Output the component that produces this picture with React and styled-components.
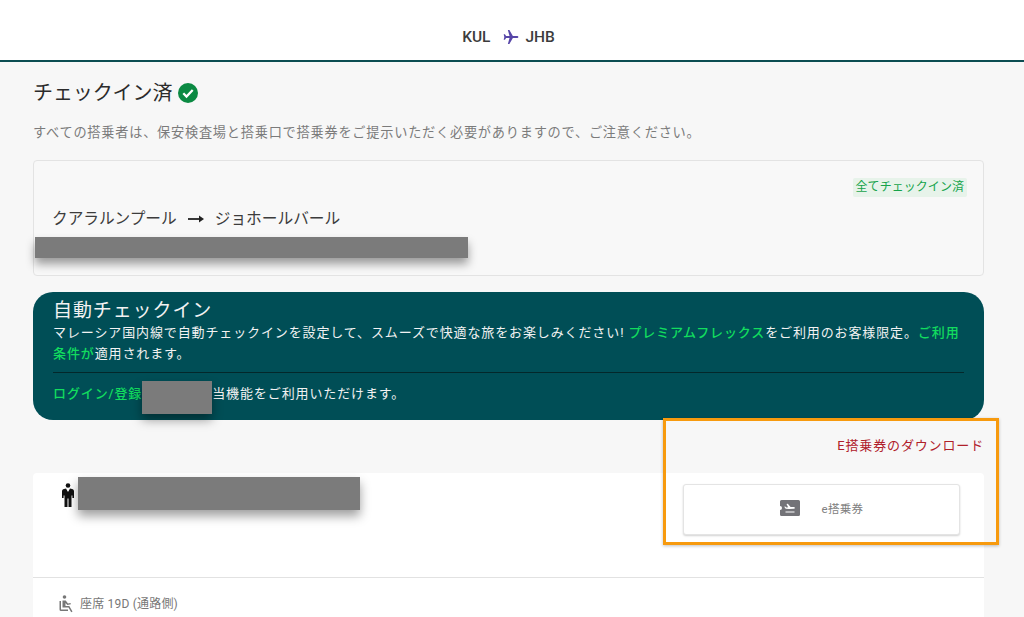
import React from "react";
import styled, { createGlobalStyle } from "styled-components";

const Global = createGlobalStyle`
  html, body { margin: 0; padding: 0; height: 617px; overflow: hidden; background: #f7f7f7; }
  body { font-family: Roboto, "Noto Sans CJK JP", sans-serif; }
  * { box-sizing: border-box; }
`;

const Page = styled.div`
  position: relative;
  width: 1024px;
  height: 617px;
  overflow: hidden;
  background: #f7f7f7;
`;
const Header = styled.header`
  height: 62px;
  background: #fff;
  border-bottom: 2px solid #0c4d52;
  display: flex;
  align-items: center;
  justify-content: center;
  gap: 6px;
  padding: 13px 7px 0 0;
  font-size: 15.5px;
  font-weight: 500;
  color: #3c3c3c;
`;
const HeaderPlane = styled.span`
  display: flex;
  margin-left: 7px;
`;
const Main = styled.main`
  width: 951px;
  margin-left: 33px;
`;
const TitleRow = styled.div`
  display: flex;
  align-items: center;
  gap: 6px;
  height: 22px;
  margin-top: 20px;
`;
const Title = styled.h1`
  margin: 0;
  font-size: 20px;
  line-height: 22px;
  font-weight: 400;
  letter-spacing: -0.1px;
  color: #2b2b2b;
`;
const Notice = styled.p`
  margin: 20px 0 0;
  font-size: 13.2px;
  line-height: 18px;
  letter-spacing: 0.76px;
  color: #7b7b7b;
  white-space: nowrap;
`;
const RouteCard = styled.section`
  position: relative;
  height: 116px;
  margin-top: 18px;
  padding: 17px 16px 0 18px;
  background: #f8f8f8;
  border: 1px solid #e3e3e3;
  border-radius: 4px;
`;
const BadgeRow = styled.div`
  display: flex;
  justify-content: flex-end;
`;
const Badge = styled.span`
  padding: 0 3px;
  height: 19px;
  line-height: 19px;
  font-size: 12px;
  letter-spacing: 0.05px;
  color: #16a34a;
  background: #e7f3ea;
  border-radius: 2px;
`;
const RouteLine = styled.div`
  display: flex;
  align-items: center;
  gap: 10px;
  margin-top: 10px;
  font-size: 15.7px;
  line-height: 24px;
  color: #3c3c3c;
`;
const Banner = styled.section`
  position: relative;
  height: 128px;
  margin-top: 16px;
  padding: 7px 20px 0 20px;
  background: #004e56;
  border-radius: 20px;
  color: #f2f2f2;
`;
const BannerTitle = styled.h2`
  margin: 0;
  font-size: 19px;
  line-height: 23px;
  font-weight: 400;
  letter-spacing: 0.9px;
`;
const BannerText = styled.p`
  margin: 0;
  font-size: 13px;
  line-height: 21px;
  font-weight: 400;
  letter-spacing: 0.88px;
`;
const Accent = styled.span`
  color: #12dc5e;
  font-weight: 500;
`;
const RedactedGap = styled.span`
  display: inline-block;
  width: 70px;
`;
const Rule = styled.hr`
  margin: 8px 0 10px;
  border: 0;
  border-top: 1px solid #03282b;
`;
const DownloadRow = styled.div`
  display: flex;
  justify-content: flex-end;
  margin-top: 16px;
  font-size: 13px;
  line-height: 20px;
  letter-spacing: 0.85px;
  color: #b0202a;
`;
const PassengerCard = styled.section`
  height: 200px;
  margin-top: 17px;
  background: #fff;
  border-radius: 4px 4px 0 0;
`;
const PassengerTop = styled.div`
  display: flex;
  justify-content: space-between;
  height: 105px;
  padding: 11px 24px 0 29px;
  border-bottom: 1px solid #e2e2e2;
`;
const PersonSlot = styled.div`
  margin-top: -1px;
`;
const TicketButton = styled.button`
  display: flex;
  align-items: center;
  justify-content: center;
  gap: 22px;
  width: 277px;
  height: 51px;
  padding: 0 0 3px 0;
  background: #fff;
  border: 1px solid #e4e4e4;
  border-radius: 3px;
  box-shadow: 0 1px 2px rgba(0, 0, 0, 0.18);
  font: inherit;
  font-size: 11.5px;
  letter-spacing: 0.3px;
  color: #808080;
`;
const SeatRow = styled.div`
  display: flex;
  align-items: center;
  gap: 6px;
  padding: 16px 0 0 26px;
  font-size: 12px;
  line-height: 20px;
  letter-spacing: 0.2px;
  color: #777;
`;
const Redact = styled.div`
  position: absolute;
  left: ${p => p.$x}px;
  top: ${p => p.$y}px;
  width: ${p => p.$w}px;
  height: ${p => p.$h}px;
  background: #7b7b7b;
  box-shadow: 0 6px 10px rgba(0, 0, 0, 0.38);
`;
const Highlight = styled.div`
  position: absolute;
  left: 663px;
  top: 418px;
  width: 336px;
  height: 127px;
  border: 3px solid #f79a0e;
  box-shadow: 0 1px 3px rgba(0, 0, 0, 0.25);
`;

const Plane = () => (
  <svg width="16" height="16" viewBox="0 0 24 24" fill="#5746a8" aria-hidden="true">
    <path d="M23 12c0-1-.9-1.600-2-1.600h-6.200L9.600 1.500H7.300l2.500 8.900H4.600L2.900 8H1l1 4-1 4h1.900l1.700-2.400h5.200l-2.500 8.900h2.300l5.200-8.900H21c1.100 0 2-.6 2-1.600z" />
  </svg>
);
const Check = () => (
  <svg width="20" height="20" viewBox="0 0 20 20" aria-hidden="true">
    <circle cx="10" cy="10" r="10" fill="#0b8a43" />
    <path d="M5.300 10.300l3.200 3.200 6.200-6.500" fill="none" stroke="#fff" strokeWidth="2.300" />
  </svg>
);
const Arrow = () => (
  <svg width="18" height="10" viewBox="0 0 18 10" aria-hidden="true">
    <path d="M1 5h12" stroke="#222" strokeWidth="1.800" />
    <path d="M12 1.500L17 5l-5 3.500z" fill="#222" />
  </svg>
);
const Person = () => (
  <svg width="12" height="25" viewBox="0 0 12 25" aria-hidden="true">
    <circle cx="6" cy="2.500" r="2.300" fill="#111" />
    <path d="M2 6l2-.4 2 3.400 2-3.400 2 .4c1.200.3 2 1 2 2.200V15h-1.600v-2.500H9.500V24H6.500v-8.500h-1V24h-3V12.500H1.600V15H0V8.200C0 7 .8 6.300 2 6z" fill="#111" />
    <path d="M4.800 6h2.400L6 8z" fill="#fff" />
  </svg>
);
const Ticket = () => (
  <svg width="20" height="16" viewBox="0 0 20 16" aria-hidden="true">
    <path d="M1.500 0h17A1.500 1.500 0 0 1 20 1.500v13a1.500 1.500 0 0 1-1.500 1.500h-17A1.500 1.500 0 0 1 0 14.500V10a2 2 0 0 0 0-4V1.500A1.500 1.500 0 0 1 1.500 0z" fill="#737378" />
    <path d="M6.500 4l1.300-.3 2.800 3.300 3.300.1c1.200.1 1.300 1.600.1 1.700l-4.900.2-3.400-.3-1.500-2 1-.2 1.300 1 1.600-.2zM5.500 11.500h9v1h-9z" fill="#fff" />
  </svg>
);
const Seat = () => (
  <svg width="15" height="18" viewBox="0 0 15 18" aria-hidden="true">
    <circle cx="5.500" cy="2" r="1.800" fill="#777" />
    <path d="M0.500 6H2v8.500h7V16H2a1.500 1.500 0 0 1-1.500-1.500z" fill="#777" />
    <path d="M3.500 5.500h3.200L9 8.500l2.500-.6.400 1.300-3.600.9-1.800-2v3h3.800l3.200 5.400-1.300.7-2.700-4.600H3.500z" fill="#777" />
  </svg>
);

export default function App() {
  return (
    <Page>
      <Global />
      <Header>
        <span>KUL</span>
        <HeaderPlane>
          <Plane />
        </HeaderPlane>
        <span>JHB</span>
      </Header>
      <Main>
        <TitleRow>
          <Title>チェックイン済</Title>
          <Check />
        </TitleRow>
        <Notice>すべての搭乗者は、保安検査場と搭乗口で搭乗券をご提示いただく必要がありますので、ご注意ください。</Notice>
        <RouteCard>
          <BadgeRow>
            <Badge>全てチェックイン済</Badge>
          </BadgeRow>
          <RouteLine>
            <span>クアラルンプール</span>
            <Arrow />
            <span>ジョホールバール</span>
          </RouteLine>
        </RouteCard>
        <Banner>
          <BannerTitle>自動チェックイン</BannerTitle>
          <BannerText>
            マレーシア国内線で自動チェックインを設定して、スムーズで快適な旅をお楽しみください! <Accent>プレミアムフレックス</Accent>をご利用のお客様限定。<Accent>ご利用条件が</Accent>適用されます。
          </BannerText>
          <Rule />
          <BannerText>
            <Accent>ログイン/登録</Accent>
            <RedactedGap />
            当機能をご利用いただけます。
          </BannerText>
        </Banner>
        <DownloadRow>E搭乗券のダウンロード</DownloadRow>
        <PassengerCard>
          <PassengerTop>
            <PersonSlot>
              <Person />
            </PersonSlot>
            <TicketButton>
              <Ticket />
              <span>e搭乗券</span>
            </TicketButton>
          </PassengerTop>
          <SeatRow>
            <Seat />
            <span>座席 19D (通路側)</span>
          </SeatRow>
        </PassengerCard>
      </Main>
      <Redact $x={35} $y={237} $w={433} $h={21} />
      <Redact $x={142} $y={381} $w={70} $h={33} />
      <Redact $x={78} $y={477} $w={282} $h={33} />
      <Highlight />
    </Page>
  );
}
